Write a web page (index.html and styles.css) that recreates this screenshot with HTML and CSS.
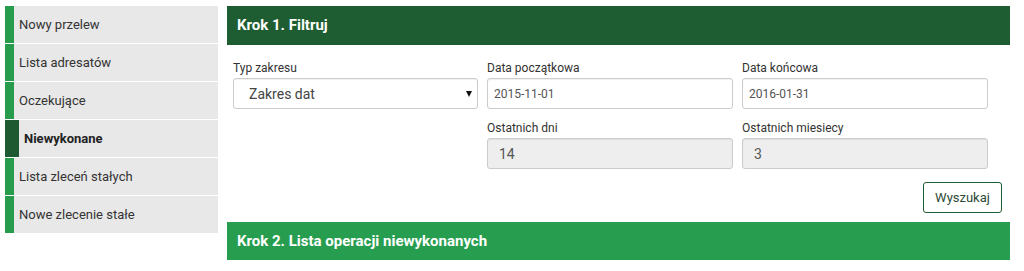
FILE: index.html
```html
<!DOCTYPE html>
<html lang="pl">
<head>
    <meta charset="UTF-8">
    <meta name="viewport" content="width=device-width, initial-scale=1.0">
    <title>Niewykonane</title>
    <link rel="stylesheet" href="styles.css">
</head>
<body>

<div class="page">
    <ul class="side-menu">
        <li><a href="#">Nowy przelew</a></li>
        <li><a href="#">Lista adresatów</a></li>
        <li><a href="#">Oczekujące</a></li>
        <li class="active"><a href="#">Niewykonane</a></li>
        <li><a href="#">Lista zleceń stałych</a></li>
        <li><a href="#">Nowe zlecenie stałe</a></li>
    </ul>

    <div class="main">
        <div class="step-header dark">Krok 1. Filtruj</div>

        <div class="filter">
            <div class="form-group">
                <label for="type">Typ zakresu</label>
                <div class="select-wrap">
                    <select id="type">
                        <option>Zakres dat</option>
                        <option>Ostatnie dni</option>
                        <option>Ostatnie miesiące</option>
                    </select>
                </div>
            </div>
            <div class="form-group">
                <label for="from">Data początkowa</label>
                <input type="text" id="from" value="2015-11-01">
            </div>
            <div class="form-group">
                <label for="to">Data końcowa</label>
                <input type="text" id="to" value="2016-01-31">
            </div>
            <div class="form-group skip">
                <label for="days">Ostatnich dni</label>
                <input type="text" id="days" class="num" value="14" disabled>
            </div>
            <div class="form-group">
                <label for="months">Ostatnich miesiecy</label>
                <input type="text" id="months" class="num" value="3" disabled>
            </div>
        </div>

        <div class="actions">
            <button type="button">Wyszukaj</button>
        </div>

        <div class="step-header light">Krok 2. Lista operacji niewykonanych</div>
    </div>
</div>

</body>
</html>
```

FILE: styles.css
```css
body {
    margin: 0;
    font-family: Roboto, "Liberation Sans", Arial, sans-serif;
    background-color: #fff;
    color: #333;
}
.page {
    display: flex;
    align-items: flex-start;
    padding: 6px 0 0 5px;
}

/* menu po lewej */
.side-menu {
    list-style: none;
    margin: 0;
    padding: 0;
    width: 213px;
}
.side-menu li {
    height: 37px;
    margin-bottom: 1px;
    background-color: #e8e8e8;
    border-left: 9px solid #279c4d;
}
.side-menu li a {
    display: block;
    line-height: 37px;
    padding-left: 5px;
    font-size: 13px;
    color: #333;
    text-decoration: none;
}
.side-menu li.active {
    border-left: 14px solid #1d5a31;
}
.side-menu li.active a {
    font-weight: bold;
    color: #222;
}

/* prawa kolumna */
.main {
    width: 783px;
    margin-left: 9px;
}
.step-header {
    height: 39px;
    line-height: 39px;
    padding-left: 10px;
    color: #fff;
    font-size: 15px;
    font-weight: bold;
}
.step-header.dark {
    background-color: #1d5d31;
}
.step-header.light {
    height: 38px;
    line-height: 38px;
    background-color: #279e4f;
}

.filter {
    display: grid;
    grid-template-columns: 245px 246px 246px;
    column-gap: 9px;
    row-gap: 12px;
    padding: 16px 0 0 6px;
}
.form-group.skip {
    grid-column: 2;
}
.form-group label {
    display: block;
    height: 17px;
    font-size: 12px;
    color: #333;
}
.form-group input,
.form-group select {
    box-sizing: border-box;
    width: 100%;
    height: 31px;
    margin: 0;
    padding: 0 6px;
    border: 1px solid #ccc;
    border-radius: 3px;
    box-shadow: inset 0 1px 1px rgba(0, 0, 0, 0.06);
    background-color: #fff;
    font-family: Roboto, "Liberation Sans", Arial, sans-serif;
    font-size: 12px;
    color: #555;
}
.form-group input.num {
    padding-left: 11px;
    font-size: 14px;
    background-color: #eee;
    color: #555;
}
.select-wrap {
    position: relative;
}
.form-group select {
    appearance: none;
    -webkit-appearance: none;
    padding-left: 15px;
    font-size: 14px;
    color: #444;
}
.select-wrap::after {
    content: "";
    position: absolute;
    right: 6px;
    top: 13px;
    border-left: 3px solid transparent;
    border-right: 3px solid transparent;
    border-top: 6px solid #111;
    pointer-events: none;
}

.actions {
    display: flex;
    justify-content: flex-end;
    padding: 13px 8px 9px 0;
}
.actions button {
    width: 79px;
    height: 31px;
    background-color: #fff;
    border: 1px solid #1d5d31;
    border-radius: 3px;
    font-family: Roboto, "Liberation Sans", Arial, sans-serif;
    font-size: 13px;
    color: #2d4a37;
}
```
